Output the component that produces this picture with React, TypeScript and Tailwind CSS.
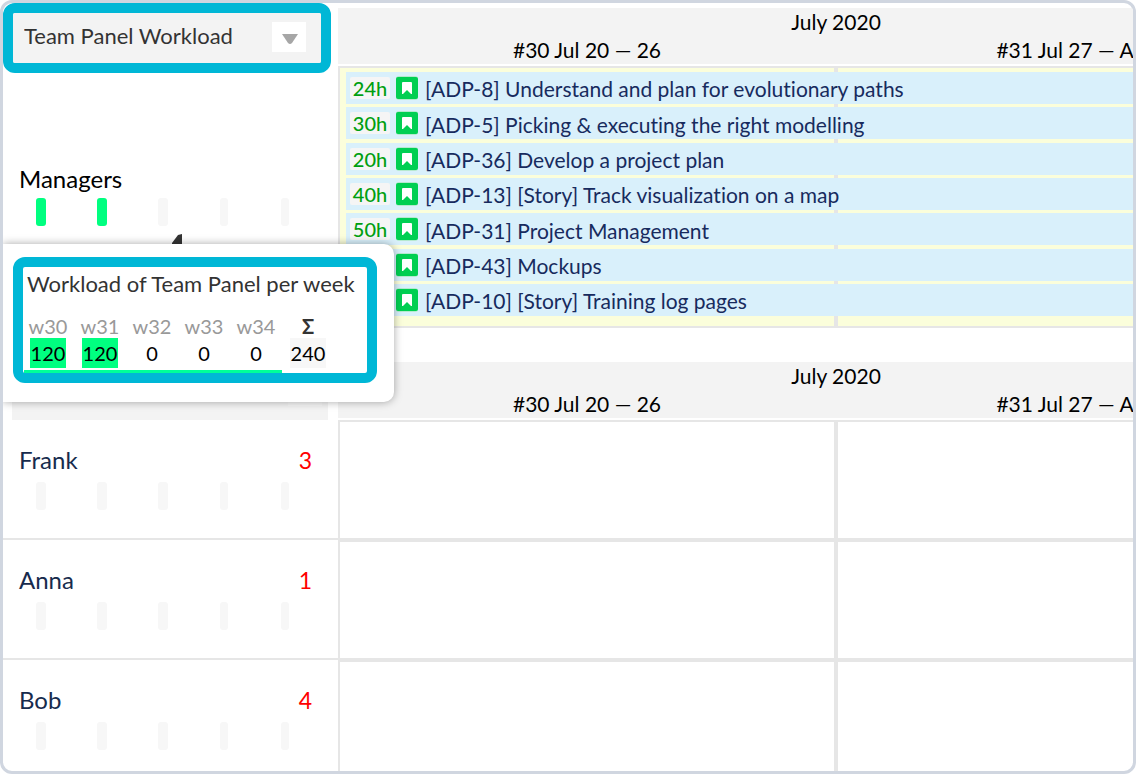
import React from "react";

type Task = { hours: string; title: string };

const tasks: Task[] = [
  { hours: "24h", title: "[ADP-8] Understand and plan for evolutionary paths" },
  { hours: "30h", title: "[ADP-5] Picking & executing the right modelling" },
  { hours: "20h", title: "[ADP-36] Develop a project plan" },
  { hours: "40h", title: "[ADP-13] [Story] Track visualization on a map" },
  { hours: "50h", title: "[ADP-31] Project Management" },
  { hours: "30h", title: "[ADP-43] Mockups" },
  { hours: "46h", title: "[ADP-10] [Story] Training log pages" },
];

const people = [
  { name: "Frank", count: 3 },
  { name: "Anna", count: 1 },
  { name: "Bob", count: 4 },
];

const weeks = [
  { label: "w30", hours: 120 },
  { label: "w31", hours: 120 },
  { label: "w32", hours: 0 },
  { label: "w33", hours: 0 },
  { label: "w34", hours: 0 },
];

function LoadBars({ filled = 0 }: { filled?: number }) {
  return (
    <div className="ml-2 grid w-[304px] grid-cols-5 justify-items-center">
      {[0, 1, 2, 3, 4].map((i) => (
        <span
          key={i}
          className={`h-7 rounded-[3px] ${i < 3 ? "w-2.5" : "w-2"} ${i < filled ? "bg-[#00ff80]" : "bg-[#f7f7f7]"}`}
        />
      ))}
    </div>
  );
}

function TimelineHeader() {
  return (
    <div className="mb-0.5 h-14 w-[996px] bg-[#f3f3f3] text-center text-[21px] leading-7">
      <div>July 2020</div>
      <div className="grid grid-cols-2">
        <span>#30 Jul 20 — 26</span>
        <span>#31 Jul 27 — Aug 2</span>
      </div>
    </div>
  );
}

function WeekCells({ className }: { className: string }) {
  return (
    <div className="grid w-[996px] grid-cols-2">
      <div className={`border-2 border-[#e6e6e6] ${className}`} />
      <div className={`border-2 border-[#e6e6e6] ${className}`} />
    </div>
  );
}

function StoryIcon() {
  return (
    <svg viewBox="0 0 24 24" className="size-6 shrink-0" aria-hidden="true">
      <rect x="1" y="0" width="22" height="24" rx="3" fill="#b5e9cf" />
      <rect x="1" y="1" width="22" height="22" rx="2" fill="#00cf52" />
      <path d="M7 7q0-1 1-1h8q1 0 1 1v11h-1l-4-4-4 4H7z" fill="#fff" />
    </svg>
  );
}

function WorkloadPopup() {
  return (
    <div className="absolute left-0 top-[241px] z-10 w-[391px] rounded-r-[10px] bg-white pb-[19px] pl-2.5 pr-[17px] pt-[13px] shadow-[0_0_8px_rgba(0,0,0,0.35)]">
      <div className="h-[126px] rounded-xl border-10 border-[#00b7d6]">
        <h2 className="pl-1 pt-1 text-[22px] leading-[26px] whitespace-nowrap text-[#333]">
          Workload of Team Panel per week
        </h2>
        <table className="-ml-px mt-4 table-fixed border-collapse text-center text-[20px]">
          <thead>
            <tr className="h-[25px] leading-6">
              {weeks.map((w) => (
                <th key={w.label} className="w-[52px] p-0 font-normal text-[#999]">{w.label}</th>
              ))}
              <th className="w-[52px] p-0 font-bold text-[#333]">Σ</th>
            </tr>
          </thead>
          <tbody>
            <tr>
              {weeks.map((w) => (
                <td key={w.label} className="p-0">
                  <div className={`mx-auto w-9 leading-[30px] ${w.hours > 0 ? "bg-[#00ff80]" : ""}`}>{w.hours}</div>
                </td>
              ))}
              <td className="p-0">
                <div className="mx-auto w-9 bg-[#f7f7f7] leading-[30px]">240</div>
              </td>
            </tr>
          </tbody>
        </table>
        <div className="ml-px mt-0.5 h-[3px] w-[258px] bg-[#00ff99]" />
      </div>
    </div>
  );
}

export default function App() {
  return (
    <div className="relative h-screen overflow-hidden rounded-xl border-3 border-[#d0d6e0] bg-white font-['Lato',sans-serif] text-black [font-variant-ligatures:none]">
      <section className="flex h-[359px]">
        <aside className="w-[335px] shrink-0">
          <div className="relative h-[70px] w-[328px] rounded-xl border-10 border-[#00b7d6] bg-[#f3f3f3]">
            <select
              aria-label="Panel"
              className="h-full w-full appearance-none rounded-[2px] bg-[#f3f3f3] pb-1.5 pl-[11px] text-[22px] text-[#333]"
            >
              <option>Team Panel Workload</option>
            </select>
            <span className="pointer-events-none absolute right-[15px] top-[9px] flex h-[30px] w-[34px] items-center justify-center bg-white">
              <svg viewBox="0 0 16 10" className="ml-0.5 mt-1 h-2.5 w-4" aria-hidden="true">
                <path d="M0 0h16L10 9q-2 2-4 0z" fill="#a6a6a6" />
              </svg>
            </span>
          </div>
          <div className="pl-4 pt-[94px] text-[24px] leading-6">Managers</div>
          <div className="pt-[7px]">
            <LoadBars filled={2} />
          </div>
          <svg viewBox="0 0 10 12" className="ml-[169px] mt-2 h-3 w-2.5" aria-hidden="true">
            <path d="M0 9L6 1l4-1v12H0z" fill="#333" />
          </svg>
        </aside>
        <div className="min-w-0 grow overflow-hidden pt-[5px]">
          <TimelineHeader />
          <div className="grid w-[996px]">
            <div className="col-start-1 row-start-1">
              <WeekCells className="h-[262px] bg-[#fbfedb]" />
            </div>
            <ul className="col-start-1 row-start-1 ml-2 mt-1.5 flex h-[244px] flex-col justify-between">
              {tasks.map((t) => (
                <li key={t.title} className="flex h-8 items-center bg-[#d9f0fb] pl-1 text-[21px]">
                  <span className="mr-[5px] w-10 rounded-[2px] bg-[#f5f5f5] text-center text-[20px] font-medium leading-[22px] text-[#009f10]">
                    {t.hours}
                  </span>
                  <StoryIcon />
                  <span className="pl-1.5 pt-0.5 whitespace-nowrap text-[#172b5e]">{t.title}</span>
                </li>
              ))}
            </ul>
          </div>
        </div>
      </section>

      <section className="flex">
        <aside className="w-[335px] shrink-0">
          <div className="ml-[9px] flex h-[58px] w-[316px] justify-end bg-[#f3f3f3] pr-1.5">
            <span className="h-11 w-[34px] bg-[#f7f7f7]" />
          </div>
          {people.map((p) => (
            <div key={p.name} className="h-[120px] border-b-2 border-[#e6e6e6] pt-7">
              <div className="flex justify-between pl-4 pr-[26px] text-[24px] leading-6">
                <span className="text-[#172b4d]">{p.name}</span>
                <span className="text-[23px] text-[#ff0000]">{p.count}</span>
              </div>
              <div className="pt-2.5">
                <LoadBars />
              </div>
            </div>
          ))}
        </aside>
        <div className="min-w-0 grow overflow-hidden">
          <TimelineHeader />
          {people.map((p) => (
            <WeekCells key={p.name} className="h-[120px]" />
          ))}
        </div>
      </section>

      <WorkloadPopup />
    </div>
  );
}
